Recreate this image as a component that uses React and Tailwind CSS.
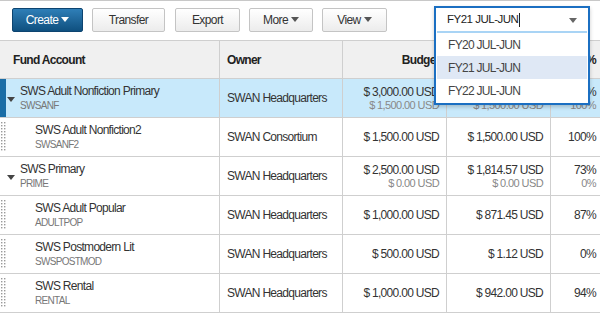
import React from "react";

const rows = [
  { name: "SWS Adult Nonfiction Primary", code: "SWSANF", owner: "SWAN Headquarters", budget: "$ 3,000.00 USD", budget2: "$ 1,500.00 USD", spent: "$ 1,500.00 USD", spent2: "$ 1,500.00 USD", pct: "50%", pct2: "100%", parent: true, selected: true },
  { name: "SWS Adult Nonfiction2", code: "SWSANF2", owner: "SWAN Consortium", budget: "$ 1,500.00 USD", spent: "$ 1,500.00 USD", pct: "100%" },
  { name: "SWS Primary", code: "PRIME", owner: "SWAN Headquarters", budget: "$ 2,500.00 USD", budget2: "$ 0.00 USD", spent: "$ 1,814.57 USD", spent2: "$ 0.00 USD", pct: "73%", pct2: "0%", parent: true },
  { name: "SWS Adult Popular", code: "ADULTPOP", owner: "SWAN Headquarters", budget: "$ 1,000.00 USD", spent: "$ 871.45 USD", pct: "87%" },
  { name: "SWS Postmodern Lit", code: "SWSPOSTMOD", owner: "SWAN Headquarters", budget: "$ 500.00 USD", spent: "$ 1.12 USD", pct: "0%" },
  { name: "SWS Rental", code: "RENTAL", owner: "SWAN Headquarters", budget: "$ 1,000.00 USD", spent: "$ 942.00 USD", pct: "94%" },
];

const cols = "grid grid-cols-[220px_123px_104px_104px_49px]";

const Caret = ({ className }) => (
  <svg width="8" height="5" viewBox="0 0 8 5" className={className}>
    <path d="M0 0h8L4 5z" fill="currentColor" />
  </svg>
);

// little dotted grip shown on child rows
const Grip = () => (
  <svg width="5" height="30" viewBox="0 0 5 30" className="absolute left-[1px] top-[4px]">
    {Array.from({ length: 10 }).map((_, i) => (
      <g key={i} fill="#9a9a9a">
        <rect x="0" y={i * 3} width="1.4" height="1.4" />
        <rect x="3" y={i * 3} width="1.4" height="1.4" />
      </g>
    ))}
  </svg>
);

const Button = ({ label, caret, primary, width }) => (
  <button
    className={`h-[24px] ${width} flex items-center justify-center gap-[3px] rounded-[2px] text-[12px] tracking-[-0.6px] ${
      primary
        ? "bg-gradient-to-b from-[#2f7fb8] to-[#0f507f] border border-[#0d4470] text-white"
        : "bg-gradient-to-b from-white to-[#ececec] border border-[#c4c4c4] text-[#333]"
    }`}
  >
    {label}
    {caret && <Caret className={primary ? "text-white" : "text-[#555]"} />}
  </button>
);

const Amount = ({ main, sub }) => (
  <div className="flex flex-col items-end justify-center pr-[7px] border-r border-[#cfcfcf]">
    <span className="text-[12px] leading-[13px] text-[#333]">{main}</span>
    {sub && <span className="text-[11px] tracking-[-0.6px] leading-[12px] text-[#888]">{sub}</span>}
  </div>
);

export default function App() {
  return (
    <div className="relative w-[600px] h-[317px] overflow-hidden bg-white border-t border-[#c8c8c8] tracking-[-0.7px] font-['Liberation_Sans',Arial,sans-serif]">
      <div className="flex items-center h-[39px] pl-[12px] pb-[2px]">
        <Button label="Create" caret primary width="w-[71px]" />
        <div className="w-[9px]" />
        <Button label="Transfer" width="w-[73px]" />
        <div className="w-[10px]" />
        <Button label="Export" width="w-[65px]" />
        <div className="w-[9px]" />
        <Button label="More" caret width="w-[64px]" />
        <div className="w-[9px]" />
        <Button label="View" caret width="w-[65px]" />
      </div>

      <div className={`${cols} h-[39px] bg-[#f0f0f0] border-y border-[#cfcfcf] text-[12px] font-bold text-[#222]`}>
        <div className="flex items-center pl-[13px] border-r border-[#cfcfcf]">Fund Account</div>
        <div className="flex items-center pl-[7px] border-r border-[#cfcfcf]">Owner</div>
        <div className="flex items-center justify-end pr-[7px] border-r border-[#cfcfcf]">Budget</div>
        <div className="flex items-center justify-end pr-[7px] border-r border-[#cfcfcf]">Expended</div>
        <div className="flex items-center justify-end pr-[4px]">%</div>
      </div>

      {rows.map((r) => (
        <div
          key={r.code}
          className={`${cols} relative h-[39px] border-b border-[#cfcfcf] ${r.selected ? "bg-[#c8e9fb]" : "bg-white"}`}
        >
          {r.selected && <div className="absolute left-0 top-0 bottom-0 w-[6px] bg-[#1a6da6]" />}
          {!r.parent && <Grip />}
          <div className={`relative flex flex-col justify-center border-r border-[#cfcfcf] ${r.parent ? "pl-[20px]" : "pl-[35px]"}`}>
            {r.parent && <Caret className="absolute left-[7px] top-[18px] text-[#444]" />}
            <span className="text-[12px] leading-[16px] text-[#333]">{r.name}</span>
            <span className="text-[10px] leading-[14px] tracking-[-0.7px] text-[#777]">{r.code}</span>
          </div>
          <div className="flex items-center pl-[7px] text-[12px] text-[#333] border-r border-[#cfcfcf]">{r.owner}</div>
          <Amount main={r.budget} sub={r.budget2} />
          <Amount main={r.spent} sub={r.spent2} />
          <div className="flex flex-col items-end justify-center pr-[4px]">
            <span className="text-[12px] leading-[13px] text-[#333]">{r.pct}</span>
            {r.pct2 && <span className="text-[11px] tracking-[-0.6px] leading-[12px] text-[#888]">{r.pct2}</span>}
          </div>
        </div>
      ))}

      <div className="absolute left-[434px] top-[5px] w-[156px] h-[99px] border-2 border-[#1b6fc2] bg-white shadow-[0_2px_4px_rgba(0,0,0,0.2)]">
        <div className="mx-[1px] mt-[1px] h-[24px] flex items-center justify-between pl-[10px] pr-[10px] border-b-2 border-[#a9d4f5] text-[11.5px] tracking-[-0.5px] text-[#222]">
          <span>
            FY21 JUL-JUN<span className="inline-block w-[1px] h-[14px] bg-[#222] align-middle ml-[1px]" />
          </span>
          <Caret className="text-[#666]" />
        </div>
        <div className="h-[23px] flex items-center pl-[12px] text-[12px] text-[#444]">FY20 JUL-JUN</div>
        <div className="h-[23px] mx-[1px] flex items-center pl-[11px] text-[12px] text-[#444] bg-[#dfe8f5]">FY21 JUL-JUN</div>
        <div className="h-[23px] flex items-center pl-[12px] text-[12px] text-[#444]">FY22 JUL-JUN</div>
      </div>
    </div>
  );
}
